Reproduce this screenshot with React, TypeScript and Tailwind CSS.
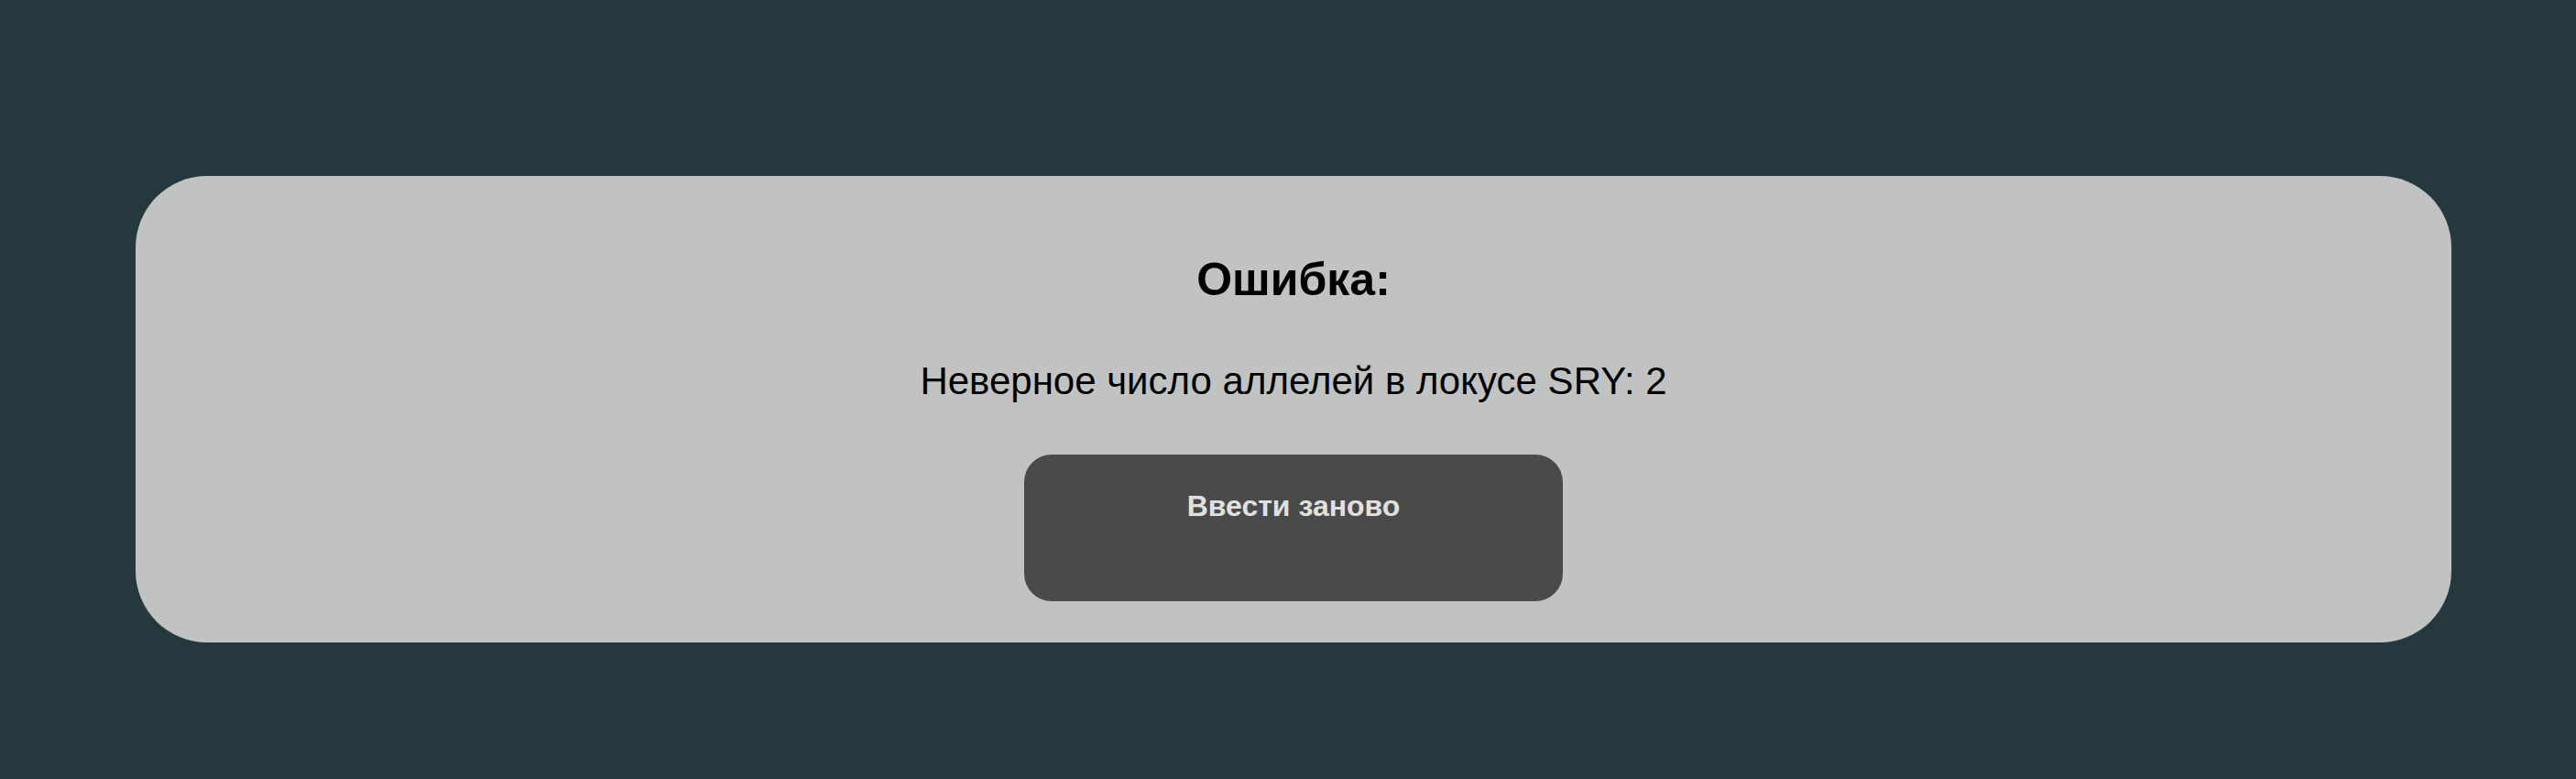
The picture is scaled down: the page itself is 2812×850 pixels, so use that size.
export default function App() {
  return (
    <div className="min-h-[850px] w-full bg-[#25383d] pt-[192px] font-['Liberation_Sans',Arial,sans-serif]">
      <div className="ml-[148px] flex w-[2528px] flex-col items-center rounded-[78px] bg-[#c1c3c2] pb-[45px] pt-[85px] text-black">
        <h1 className="text-[50px] font-bold leading-[57px]">Ошибка:</h1>
        <p className="mt-[58px] text-[42px] leading-[48px]">Неверное число аллелей в локусе SRY: 2</p>
        <button className="mt-[56px] flex h-[160px] w-[588px] items-start justify-center rounded-[30px] bg-[#494b4a] pt-[38px] text-[32px] font-bold leading-[36px] text-[#e0e0e0]">
          Ввести заново
        </button>
      </div>
    </div>
  );
}
